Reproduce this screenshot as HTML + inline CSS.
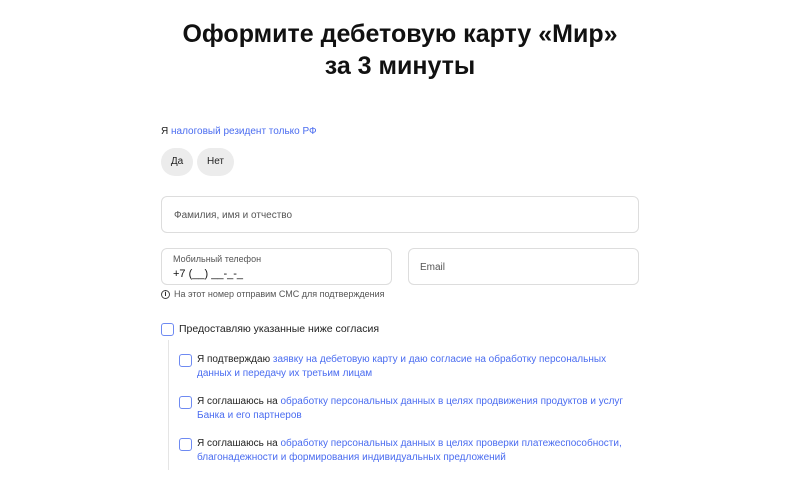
<!DOCTYPE html>
<html><head><meta charset="utf-8"><style>
*{margin:0;padding:0;box-sizing:border-box}
body{width:800px;height:480px;background:#fff;font-family:"Liberation Sans",sans-serif;color:#222;position:relative;overflow:hidden}
.a{position:absolute}
h1{position:absolute;left:0;width:800px;top:18px;text-align:center;font-size:25px;line-height:32px;font-weight:bold;color:#111}
.s{font-size:10px}
.l{color:#4a6cf0}
.pill{position:absolute;top:148px;height:28px;border-radius:14px;background:#ececec;font-size:10px;line-height:28px;text-align:center}
.inp{position:absolute;border:1px solid #ddd;border-radius:6px}
.cb{position:absolute;width:13px;height:13px;border:1.5px solid #6e8af2;border-radius:3px}
.t{position:absolute;font-size:10px;line-height:14px}
</style></head><body>
<h1>Оформите дебетовую карту «Мир»<br>за 3 минуты</h1>
<div class="a s" style="left:161px;top:126px">Я <span class="l">налоговый резидент только РФ</span></div>
<div class="pill" style="left:161px;width:32px">Да</div>
<div class="pill" style="left:197px;width:37px">Нет</div>
<div class="inp" style="left:161px;top:196px;width:478px;height:37px"><span class="a" style="left:12px;top:13px;font-size:10px;color:#555">Фамилия, имя и отчество</span></div>
<div class="inp" style="left:161px;top:248px;width:231px;height:37px"><span class="a" style="left:11px;top:5px;font-size:9px;color:#555">Мобильный телефон</span><span class="a" style="left:11px;top:19px;font-size:11px;color:#111">+7 (__) __-_-_</span></div>
<div class="inp" style="left:408px;top:248px;width:231px;height:37px"><span class="a" style="left:11px;top:13px;font-size:10px;color:#555">Email</span></div>
<div class="a" style="left:161px;top:290px;width:9px;height:9px;border:1px solid #444;border-radius:50%;font-size:7px;line-height:7px;text-align:center;font-weight:bold">i</div>
<div class="a" style="left:174px;top:289px;font-size:9px;color:#555">На этот номер отправим СМС для подтверждения</div>
<div class="cb" style="left:161px;top:323px"></div>
<div class="t" style="left:179px;top:322px;font-size:10.5px">Предоставляю указанные ниже согласия</div>
<div class="a" style="left:168px;top:340px;width:1px;height:130px;background:#e5e5e5"></div>
<div class="cb" style="left:179px;top:354px"></div>
<div class="t" style="left:197px;top:353px">Я подтверждаю <span class="l">заявку на дебетовую карту и даю согласие на обработку персональных<br>данных и передачу их третьим лицам</span></div>
<div class="cb" style="left:179px;top:396px"></div>
<div class="t" style="left:197px;top:395px">Я соглашаюсь на <span class="l">обработку персональных данных в целях продвижения продуктов и услуг<br>Банка и его партнеров</span></div>
<div class="cb" style="left:179px;top:438px"></div>
<div class="t" style="left:197px;top:437px">Я соглашаюсь на <span class="l">обработку персональных данных в целях проверки платежеспособности,<br>благонадежности и формирования индивидуальных предложений</span></div>
</body></html>
